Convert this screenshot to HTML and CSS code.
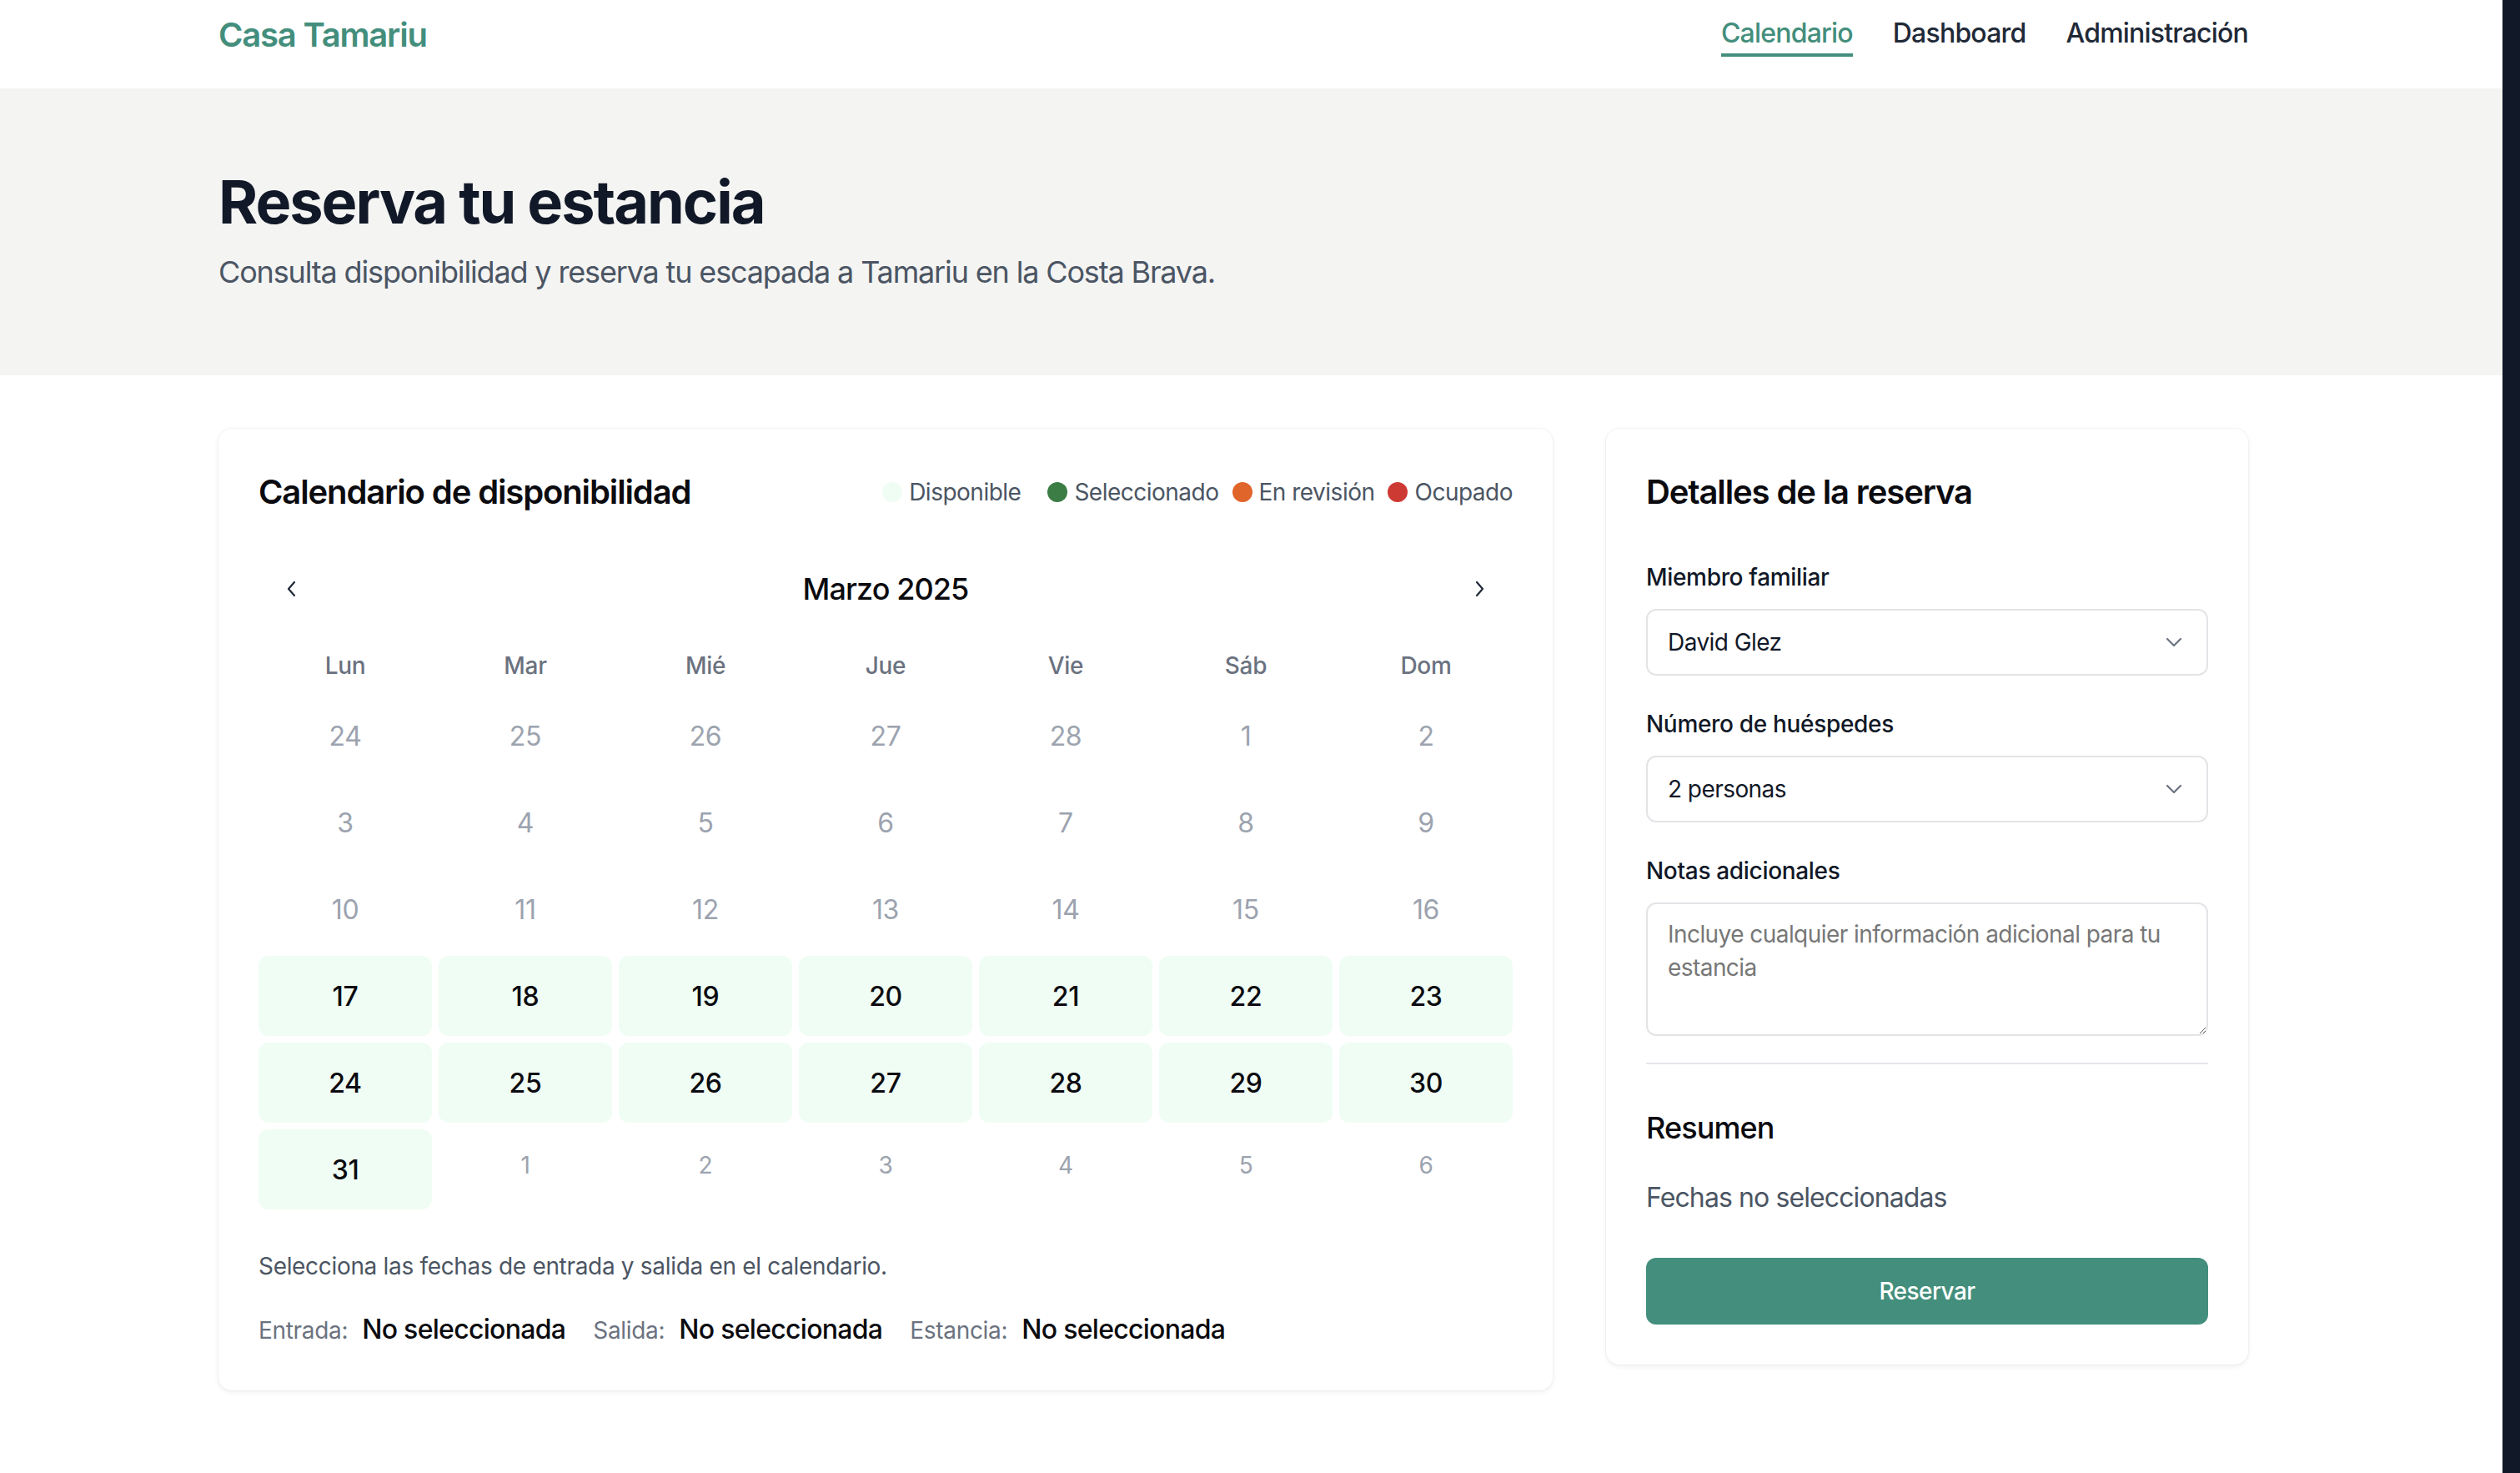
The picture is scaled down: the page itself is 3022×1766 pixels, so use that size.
FILE: index.html
```html
<!DOCTYPE html>
<html lang="es">
<head>
<meta charset="utf-8">
<title>Casa Tamariu - Reserva tu estancia</title>
<link rel="stylesheet" href="styles.css">
</head>
<body>
<div class="page">
  <header class="topbar">
    <div class="container nav-inner">
      <a class="logo" href="#">Casa Tamariu</a>
      <nav class="menu">
        <a class="menu-link active" href="#">Calendario</a>
        <a class="menu-link" href="#">Dashboard</a>
        <a class="menu-link" href="#">Administración</a>
      </nav>
    </div>
  </header>

  <section class="hero">
    <div class="container">
      <h1 class="hero-title">Reserva tu estancia</h1>
      <p class="hero-sub">Consulta disponibilidad y reserva tu escapada a Tamariu en la Costa Brava.</p>
    </div>
  </section>

  <main class="container main-grid">
    <section class="card cal-card">
      <div class="card-head">
        <h2 class="card-title">Calendario de disponibilidad</h2>
        <div class="legend">
          <span class="legend-item first"><span class="dot dot-free"></span>Disponible</span>
          <span class="legend-item"><span class="dot dot-sel"></span>Seleccionado</span>
          <span class="legend-item"><span class="dot dot-rev"></span>En revisión</span>
          <span class="legend-item"><span class="dot dot-busy"></span>Ocupado</span>
        </div>
      </div>

      <div class="month-nav">
        <button class="nav-btn" type="button" aria-label="Mes anterior">
          <svg width="14" height="20" viewBox="0 0 14 20"><polyline points="10,2 3,10 10,18" fill="none" stroke="#1f2937" stroke-width="2.2" stroke-linecap="round" stroke-linejoin="round"/></svg>
        </button>
        <div class="month-label">Marzo 2025</div>
        <button class="nav-btn" type="button" aria-label="Mes siguiente">
          <svg width="14" height="20" viewBox="0 0 14 20"><polyline points="4,2 11,10 4,18" fill="none" stroke="#1f2937" stroke-width="2.2" stroke-linecap="round" stroke-linejoin="round"/></svg>
        </button>
      </div>

      <div class="weekdays">
        <span>Lun</span><span>Mar</span><span>Mié</span><span>Jue</span><span>Vie</span><span>Sáb</span><span>Dom</span>
      </div>

      <div class="days">
        <span class="day muted">24</span><span class="day muted">25</span><span class="day muted">26</span><span class="day muted">27</span><span class="day muted">28</span><span class="day muted">1</span><span class="day muted">2</span>
        <span class="day muted">3</span><span class="day muted">4</span><span class="day muted">5</span><span class="day muted">6</span><span class="day muted">7</span><span class="day muted">8</span><span class="day muted">9</span>
        <span class="day muted">10</span><span class="day muted">11</span><span class="day muted">12</span><span class="day muted">13</span><span class="day muted">14</span><span class="day muted">15</span><span class="day muted">16</span>
        <span class="day avail">17</span><span class="day avail">18</span><span class="day avail">19</span><span class="day avail">20</span><span class="day avail">21</span><span class="day avail">22</span><span class="day avail">23</span>
        <span class="day avail">24</span><span class="day avail">25</span><span class="day avail">26</span><span class="day avail">27</span><span class="day avail">28</span><span class="day avail">29</span><span class="day avail">30</span>
        <span class="day avail">31</span><span class="day next">1</span><span class="day next">2</span><span class="day next">3</span><span class="day next">4</span><span class="day next">5</span><span class="day next">6</span>
      </div>

      <p class="help">Selecciona las fechas de entrada y salida en el calendario.</p>

      <div class="stay-info">
        <span class="info-label">Entrada:</span><span class="info-value">No seleccionada</span>
        <span class="info-label">Salida:</span><span class="info-value">No seleccionada</span>
        <span class="info-label">Estancia:</span><span class="info-value">No seleccionada</span>
      </div>
    </section>

    <aside class="card details-card">
      <h2 class="card-title">Detalles de la reserva</h2>

      <div class="field first-field">
        <label class="field-label" for="member">Miembro familiar</label>
        <div class="select-wrap">
          <select id="member" class="select"><option>David Glez</option></select>
          <svg class="select-icon" width="22" height="14" viewBox="0 0 22 14"><polyline points="3,3 11,11 19,3" fill="none" stroke="#6b7280" stroke-width="2.2" stroke-linecap="round" stroke-linejoin="round"/></svg>
        </div>
      </div>

      <div class="field">
        <label class="field-label" for="guests">Número de huéspedes</label>
        <div class="select-wrap">
          <select id="guests" class="select"><option>2 personas</option></select>
          <svg class="select-icon" width="22" height="14" viewBox="0 0 22 14"><polyline points="3,3 11,11 19,3" fill="none" stroke="#6b7280" stroke-width="2.2" stroke-linecap="round" stroke-linejoin="round"/></svg>
        </div>
      </div>

      <div class="field">
        <label class="field-label" for="notes">Notas adicionales</label>
        <textarea id="notes" class="textarea" placeholder="Incluye cualquier información adicional para tu estancia"></textarea>
      </div>

      <div class="summary">
        <h3 class="summary-title">Resumen</h3>
        <p class="summary-text">Fechas no seleccionadas</p>
        <button class="btn-primary" type="button">Reservar</button>
      </div>
    </aside>
  </main>
</div>
<div class="edge"></div>
</body>
</html>
```

FILE: styles.css
```css
* { box-sizing: border-box; }

html, body { margin: 0; padding: 0; }

body {
  display: flex;
  min-height: 1766px;
  background: #111827;
  font-family: "Inter", "Noto Sans", sans-serif;
  color: #111827;
  letter-spacing: -0.02em;
}

.page {
  width: 3001px;
  flex: none;
  background: #ffffff;
  min-height: 1766px;
}

.edge { flex: 1; }

.container {
  width: 2434px;
  margin-left: 262px;
}

/* Top bar */
.topbar {
  height: 106px;
  padding-top: 14px;
  background: #ffffff;
}

.nav-inner {
  display: flex;
  align-items: center;
  justify-content: space-between;
}

.logo {
  font-size: 40px;
  line-height: 56px;
  font-weight: 600;
  color: #438e7c;
  text-decoration: none;
  letter-spacing: -0.03em;
}

.menu {
  display: flex;
  gap: 48px;
}

.menu-link {
  font-size: 32px;
  line-height: 48px;
  font-weight: 500;
  color: #1f2937;
  text-decoration: none;
  border-bottom: 4px solid transparent;
  letter-spacing: -0.025em;
}

.menu-link.active {
  color: #438e7c;
  border-bottom-color: #438e7c;
}

/* Hero */
.hero {
  background: #f4f4f3;
  padding: 96px 0;
}

.hero-title {
  margin: 0;
  font-size: 72px;
  line-height: 80px;
  font-weight: 700;
  color: #111827;
  letter-spacing: -0.028em;
}

.hero-sub {
  margin: 16px 0 0;
  font-size: 36px;
  line-height: 56px;
  color: #4b5563;
  letter-spacing: -0.032em;
}

/* Main */
.main-grid {
  display: grid;
  grid-template-columns: 1600px 770px;
  gap: 64px;
  padding-top: 64px;
  align-items: start;
}

.card {
  background: #ffffff;
  border-radius: 16px;
  padding: 48px;
  box-shadow: 0 2px 6px rgba(17, 24, 39, 0.07), 0 0 0 1px rgba(17, 24, 39, 0.03);
}

.card-head {
  display: flex;
  align-items: center;
  justify-content: space-between;
  height: 56px;
}

.card-title {
  margin: 0;
  font-size: 40px;
  line-height: 56px;
  font-weight: 600;
  color: #0b0b0f;
  letter-spacing: -0.028em;
}

.legend {
  display: flex;
  align-items: center;
  font-size: 28px;
  line-height: 40px;
  color: #4b5563;
  letter-spacing: -0.018em;
}

.legend-item {
  display: flex;
  align-items: center;
  gap: 8px;
  margin-left: 16px;
}

.legend-item.first { margin-right: 16px; }

.dot {
  width: 24px;
  height: 24px;
  border-radius: 50%;
  display: inline-block;
}

.dot-free { background: #f0fdf4; }
.dot-sel { background: #3b7d45; }
.dot-rev { background: #e0652b; }
.dot-busy { background: #cd3a33; }

/* Month navigation */
.month-nav {
  display: flex;
  align-items: center;
  justify-content: space-between;
  height: 80px;
  margin-top: 48px;
}

.nav-btn {
  width: 80px;
  height: 80px;
  border: 0;
  background: transparent;
  display: flex;
  align-items: center;
  justify-content: center;
  padding: 0;
}

.month-label {
  font-size: 36px;
  line-height: 56px;
  font-weight: 500;
  color: #0b0b0f;
  letter-spacing: -0.025em;
}

.weekdays {
  display: grid;
  grid-template-columns: repeat(7, 1fr);
  gap: 8px;
  margin-top: 32px;
  font-size: 28px;
  line-height: 40px;
  font-weight: 500;
  color: #6b7280;
  text-align: center;
}

.days {
  display: grid;
  grid-template-columns: repeat(7, 1fr);
  grid-auto-rows: 96px;
  gap: 8px;
  margin-top: 16px;
}

.day {
  display: flex;
  align-items: center;
  justify-content: center;
  border-radius: 12px;
  font-size: 32px;
}

.day.muted { color: #9ca3af; }

.day.avail {
  background: #f0fdf4;
  color: #0b0b0f;
  font-weight: 500;
}

.day.next {
  color: #9ca3af;
  font-size: 28px;
  padding-bottom: 10px;
}

.help {
  margin: 48px 0 0;
  font-size: 28px;
  line-height: 40px;
  color: #4b5563;
}

.stay-info {
  display: flex;
  align-items: baseline;
  margin-top: 32px;
  line-height: 48px;
}

.info-label {
  font-size: 28px;
  color: #6b7280;
  margin-right: 17px;
}

.info-value {
  font-size: 32px;
  font-weight: 500;
  color: #0b0b0f;
  margin-right: 33px;
  letter-spacing: -0.022em;
}

/* Details card */
.field { margin-top: 38px; }
.field.first-field { margin-top: 54px; }

.field-label {
  display: block;
  font-size: 28px;
  line-height: 40px;
  font-weight: 500;
  color: #111827;
  margin-bottom: 18px;
}

.select-wrap { position: relative; }

.select {
  width: 100%;
  height: 80px;
  appearance: none;
  -webkit-appearance: none;
  border: 2px solid #e3e4e7;
  border-radius: 12px;
  background: #ffffff;
  padding: 0 24px;
  font-family: inherit;
  font-size: 28px;
  letter-spacing: -0.02em;
  color: #111827;
}

.select-icon {
  position: absolute;
  right: 30px;
  top: 33px;
  pointer-events: none;
}

.textarea {
  display: block;
  width: 100%;
  height: 160px;
  border: 2px solid #e3e4e7;
  border-radius: 12px;
  padding: 16px 24px;
  font-family: inherit;
  font-size: 28px;
  line-height: 40px;
  letter-spacing: -0.02em;
  color: #111827;
  resize: vertical;
}

.textarea::placeholder { color: #777777; }

.summary {
  margin-top: 32px;
  border-top: 2px solid #e5e7eb;
  padding-top: 48px;
}

.summary-title {
  margin: 0;
  font-size: 36px;
  line-height: 56px;
  font-weight: 500;
  color: #0b0b0f;
  letter-spacing: -0.025em;
}

.summary-text {
  margin: 32px 0 0;
  font-size: 32px;
  line-height: 48px;
  color: #4b5563;
  letter-spacing: -0.028em;
}

.btn-primary {
  display: block;
  width: 100%;
  height: 80px;
  margin-top: 48px;
  border: 0;
  border-radius: 12px;
  background: #438e7c;
  color: #ffffff;
  font-family: inherit;
  font-size: 28px;
  font-weight: 500;
  letter-spacing: -0.02em;
}
```
